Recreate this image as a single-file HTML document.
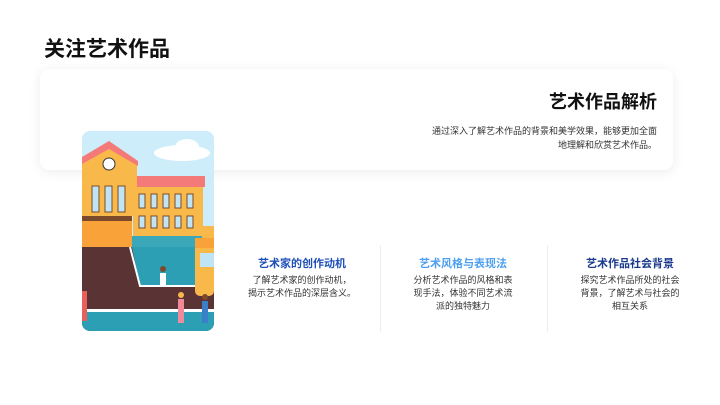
<!DOCTYPE html>
<html><head><meta charset="utf-8"><style>
body{margin:0;width:720px;height:405px;background:#fff;font-family:"Liberation Sans","Noto Sans CJK SC",sans-serif;position:relative;overflow:hidden}
.t{position:absolute;left:44px;top:33px;font-size:21px;font-weight:bold;color:#111}
.card{position:absolute;left:40px;top:69px;width:633px;height:101px;background:#fff;border-radius:9px;box-shadow:0 2px 12px rgba(0,0,0,.08)}
.h{position:absolute;right:16px;top:19px;font-size:18px;font-weight:bold;color:#111}
.p{position:absolute;right:16px;top:55px;font-size:9px;line-height:14px;color:#333;text-align:right;width:260px}
.img{position:absolute;left:82px;top:131px;width:132px;height:200px;border-radius:8px;overflow:hidden}
.col{position:absolute;top:258px;text-align:center;font-size:9px;line-height:13px;color:#333}
.col b{display:block;font-size:11px;margin-bottom:3px}
.v{position:absolute;top:245px;width:1px;height:87px;background:#eee}
</style></head><body>
<div class="t">关注艺术作品</div>
<div class="card"><div class="h">艺术作品解析</div><div class="p">通过深入了解艺术作品的背景和美学效果，能够更加全面<br>地理解和欣赏艺术作品。</div></div>
<div class="img"><svg width="132" height="200" viewBox="0 0 132 200">
<rect width="132" height="200" fill="#cdedfb"/>
<ellipse cx="100" cy="22" rx="28" ry="8" fill="#fff"/><ellipse cx="105" cy="16" rx="12" ry="8" fill="#fff"/>
<rect x="51" y="50" width="70" height="60" fill="#f9b94a"/>
<rect x="49" y="45" width="74" height="11" fill="#f47a7a"/>
<g fill="#bfe4f5" stroke="#7a4a2a" stroke-width="1"><rect x="57" y="63" width="6" height="14"/><rect x="69" y="63" width="6" height="14"/><rect x="81" y="63" width="6" height="14"/><rect x="93" y="63" width="6" height="14"/><rect x="105" y="63" width="6" height="14"/>
<rect x="57" y="85" width="6" height="12"/><rect x="69" y="85" width="6" height="12"/><rect x="81" y="85" width="6" height="12"/><rect x="93" y="85" width="6" height="12"/><rect x="105" y="85" width="6" height="12"/></g>
<rect x="115" y="95" width="17" height="22" fill="#f9b94a"/>
<path d="M0 30 L27 16 L55 32 L55 85 L0 85Z" fill="#f9b94a"/>
<path d="M0 26 L27 10 L56 30 L56 35 L27 18 L0 33Z" fill="#f47a7a"/>
<circle cx="27" cy="33" r="6" fill="#fff" stroke="#333" stroke-width="1"/>
<g fill="#bfe4f5" stroke="#7a4a2a" stroke-width="1"><rect x="10" y="55" width="7" height="26"/><rect x="23" y="55" width="7" height="26"/><rect x="36" y="55" width="7" height="26"/>
<rect x="10" y="93" width="8" height="12"/><rect x="23" y="93" width="8" height="12"/><rect x="36" y="93" width="8" height="12"/></g>
<rect x="0" y="85" width="50" height="5" fill="#7a4a2a"/>
<rect x="0" y="90" width="50" height="27" fill="#f9a23a"/>
<rect x="50" y="105" width="70" height="12" fill="#3aa8b8"/>
<rect x="0" y="116" width="132" height="84" fill="#5a3334"/>
<path d="M50 116 L120 116 L120 155 L58 155Z" fill="#2d9fb5"/>
<path d="M48 116 L58 155 L120 155" stroke="#fff" stroke-width="2" fill="none"/>
<rect x="0" y="178" width="132" height="3" fill="#fff"/>
<rect x="0" y="181" width="132" height="19" fill="#2d9fb5"/>
<rect x="113" y="107" width="19" height="58" rx="5" fill="#f9b94a"/>
<rect x="113" y="107" width="19" height="10" fill="#f9a23a"/>
<rect x="118" y="122" width="14" height="14" fill="#bfe4f5"/>
<rect x="78" y="142" width="6" height="12" fill="#fff"/><circle cx="81" cy="138" r="3" fill="#7a4a2a"/>
<rect x="96" y="168" width="6" height="24" fill="#f08a9a"/><circle cx="99" cy="164" r="3" fill="#f9b94a"/>
<rect x="120" y="170" width="6" height="22" fill="#3a80c8"/><circle cx="123" cy="166" r="3" fill="#7a4a2a"/>
<rect x="0" y="160" width="5" height="30" fill="#e8605a"/>
</svg></div>
<div class="col" style="left:232px;width:140px"><b style="color:#1d4fb8">艺术家的创作动机</b>了解艺术家的创作动机，<br>揭示艺术作品的深层含义。</div>
<div class="v" style="left:380px"></div>
<div class="col" style="left:398px;width:130px"><b style="color:#4d9ff0">艺术风格与表现法</b>分析艺术作品的风格和表<br>现手法，体验不同艺术流<br>派的独特魅力</div>
<div class="v" style="left:547px"></div>
<div class="col" style="left:565px;width:130px"><b style="color:#1a3a8c">艺术作品社会背景</b>探究艺术作品所处的社会<br>背景，了解艺术与社会的<br>相互关系</div>
</body></html>
